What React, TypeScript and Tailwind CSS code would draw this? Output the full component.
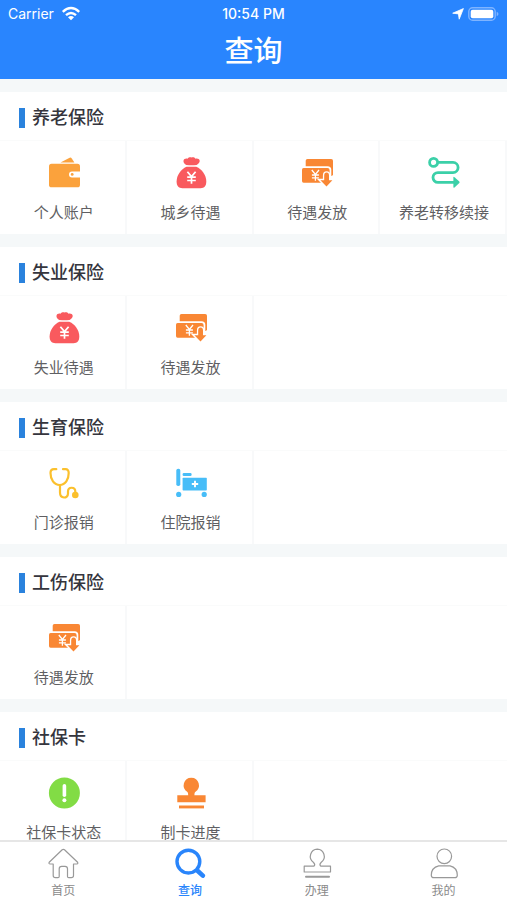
import React, { useState } from "react";

const WalletIcon = () => (
  <svg viewBox="0 0 32 32" className="h-8 w-8" aria-hidden="true">
    <path d="M12.500 5.600 21.200 0.900Q22.800 0.100 23.800 1.500L26.400 5.600Z" fill="#fba23c" />
    <rect x="1" y="6.700" width="31" height="23.600" rx="2.600" fill="#fba23c" />
    <path d="M32.500 14.400H24a3 3 0 0 0 0 6h8.500Z" fill="#fff" />
    <circle cx="24.200" cy="17.400" r="1.400" fill="#fba23c" />
  </svg>
);

const BagIcon = () => (
  <svg viewBox="0 0 32 32" className="h-8 w-8" aria-hidden="true">
    <path
      d="M11.400 7.900C9.300 6.800 8.300 5.400 8.500 3.800 8.700 2 10.700 1.200 12.500 1.700 13.500 0.200 15.300-0.100 16.500 0.400 18-0.100 19.600 0.300 20.500 1.700 22.500 1.200 24.500 2 24.700 3.800 24.800 5.400 23.800 6.800 21.600 7.900 18 8.500 15 8.500 11.400 7.900Z"
      fill="#f95a5e"
    />
    <path
      d="M11.500 9.700H21.300C27 12.300 31.300 18 31.300 24.500 31.300 29 29.300 31.200 25.600 31.200H7.400C3.600 31.200 1.600 29 1.600 24.500 1.600 18 6 12.300 11.500 9.700Z"
      fill="#f95a5e"
    />
    <path
      d="M12.400 14.700 16.500 19.600 20.600 14.700M16.500 19.600V26.800M12.200 20.200H20.800M12.200 23.500H20.800"
      fill="none"
      stroke="#fff"
      strokeWidth="1.700"
    />
  </svg>
);

const PayoutIcon = () => (
  <svg viewBox="0 0 32 32" className="h-8 w-8" aria-hidden="true">
    <rect x="4.700" y="2" width="27.300" height="17" rx="1.800" fill="#f98734" />
    <path d="M0 9.300H26.500Q30.300 9.300 30.300 13V21H0Z" fill="#fff" />
    <path d="M2.600 10.900H26.500Q28.600 10.900 28.600 13V25.700H2.600Q1 25.700 1 24.100V12.500Q1 10.900 2.600 10.900Z" fill="#f98734" />
    <path
      d="M10.800 13 14.400 17.400 18 13M14.400 17.400V23.700M10.900 18H17.900M10.900 20.800H17.900"
      fill="none"
      stroke="#fff"
      strokeWidth="1.300"
    />
    <path
      d="M19.400 23.200H23.400V18.500Q23.400 15.800 25.600 15.800 27.800 15.800 27.800 18.500V23.200H31.400L25.500 29.400Z"
      fill="none"
      stroke="#fff"
      strokeWidth="3"
    />
    <path
      d="M19.400 23.200H23.200V18.500Q23.200 15.600 25.600 15.600 28 15.600 28 18.500V23.200H31.400L25.500 29.400Z"
      fill="#f98734"
    />
  </svg>
);

const RouteIcon = () => (
  <svg viewBox="0 0 32 32" className="h-8 w-8" aria-hidden="true">
    <g fill="none" stroke="#3bd0a8" strokeWidth="2.800">
      <circle cx="5.600" cy="5.400" r="4" />
      <path d="M9.600 5.400H25a5.100 5.100 0 0 1 0 10.200H9.900a4.900 4.900 0 0 0 0 9.800H26" />
    </g>
    <path d="M25.400 20.600Q25.400 19.300 26.500 20.200L31.300 24.600Q32 25.400 31.300 26.100L26.500 30.400Q25.400 31.300 25.400 30Z" fill="#3bd0a8" />
  </svg>
);

const StethoscopeIcon = () => (
  <svg viewBox="0 0 32 32" className="h-8 w-8" aria-hidden="true">
    <g fill="none" stroke="#fbc02d" strokeWidth="2.200" strokeLinecap="round">
      <path d="M8.300 2.200H6Q2.500 2.200 2.500 6C2.500 12.500 6 18 11.700 18S20.700 12.500 20.700 6Q20.700 2.200 17.500 2.200H15" />
      <path d="M12 18V25.500C12 32 20 32 20 26.500V24.500C20 19.500 27.300 19.500 27.300 24.500V27" />
    </g>
    <circle cx="27.300" cy="28" r="3.300" fill="#fbc02d" />
  </svg>
);

const BedIcon = () => (
  <svg viewBox="0 0 32 32" className="h-8 w-8" aria-hidden="true">
    <g fill="#47bdf8">
      <rect x="1.300" y="1.700" width="4" height="17.300" rx="1.800" />
      <rect x="7.600" y="6" width="9" height="2.900" rx="1.200" />
      <rect x="7.600" y="10.700" width="24.200" height="12.700" rx="0.700" />
      <circle cx="3.700" cy="27.400" r="2.600" />
      <circle cx="29.200" cy="27.400" r="2.600" />
    </g>
    <path d="M20 13.800V20.200M16.800 17H23.200" stroke="#fff" strokeWidth="1.900" />
  </svg>
);

const StatusIcon = () => (
  <svg viewBox="0 0 32 32" className="h-8 w-8" aria-hidden="true">
    <circle cx="16.400" cy="16" r="15.500" fill="#82dc45" />
    <path d="M16.400 8.800V18.200" stroke="#fff" strokeWidth="3.600" strokeLinecap="round" />
    <circle cx="16.400" cy="23.200" r="2" fill="#fff" />
  </svg>
);

const StampIcon = () => (
  <svg viewBox="0 0 32 32" className="h-8 w-8" aria-hidden="true">
    <path
      d="M16.300 0.700A7.700 7.700 0 0 1 20.200 15Q19.400 15.600 19.400 18.300H30.600V25.300H2.300V18.300H13.200Q13.200 15.600 12.400 15A7.700 7.700 0 0 1 16.300 0.700Z"
      fill="#f98734"
    />
    <rect x="4" y="28.500" width="25" height="2.900" fill="#f98734" />
  </svg>
);

const HomeIcon = () => (
  <svg viewBox="0 0 32 32" className="h-8 w-8" fill="none" stroke="#999" strokeWidth="1.200" strokeLinejoin="round" aria-hidden="true">
    <path d="M15.200 2.800Q16.300 1.800 17.500 2.800L30.600 15.200Q31.300 16.700 29.800 17H26.500V28.500Q26.500 30.700 24.300 30.700H21.700Q20.500 30.700 20.500 29.500V21.800Q20.500 19.300 18 19.300H14.700Q12.200 19.300 12.200 21.800V29.500Q12.200 30.700 11 30.700H8.400Q6.200 30.700 6.200 28.500V17H2.900Q1.400 16.700 2.200 15.200Z" />
  </svg>
);

const SearchIcon = () => (
  <svg viewBox="0 0 32 32" className="h-8 w-8" fill="none" stroke="#2985fb" aria-hidden="true">
    <circle cx="14.400" cy="14.600" r="11.400" strokeWidth="3.400" />
    <path d="M23.800 24 28.800 28.600" strokeWidth="4.600" strokeLinecap="round" />
  </svg>
);

const HandleIcon = () => (
  <svg viewBox="0 0 32 32" className="h-8 w-8" fill="none" stroke="#999" strokeWidth="1.200" strokeLinejoin="round" aria-hidden="true">
    <path d="M16.300 2.200A7.200 7.200 0 0 1 20.300 15.200Q18.200 17.200 19.300 18.600 19.700 19.200 20.800 19.200H29.500V25H3.200V19.200H11.800Q13 19.200 13.400 18.600 14.400 17.200 12.300 15.200A7.200 7.200 0 0 1 16.300 2.200Z" />
    <path d="M5 29.700H28" strokeWidth="2" strokeLinecap="round" />
  </svg>
);

const UserIcon = () => (
  <svg viewBox="0 0 32 32" className="h-8 w-8" fill="none" stroke="#999" strokeWidth="1.200" aria-hidden="true">
    <circle cx="16.300" cy="9.300" r="7.300" />
    <path d="M10.700 18.800H22Q29.300 20.500 29.300 28.200 29.300 30.700 26.700 30.700H5.900Q3.300 30.700 3.300 28.200 3.300 20.500 10.700 18.800Z" />
  </svg>
);

const sections = [
  {
    title: "养老保险",
    items: [
      { label: "个人账户", icon: WalletIcon },
      { label: "城乡待遇", icon: BagIcon },
      { label: "待遇发放", icon: PayoutIcon },
      { label: "养老转移续接", icon: RouteIcon },
    ],
  },
  {
    title: "失业保险",
    items: [
      { label: "失业待遇", icon: BagIcon },
      { label: "待遇发放", icon: PayoutIcon },
    ],
  },
  {
    title: "生育保险",
    items: [
      { label: "门诊报销", icon: StethoscopeIcon },
      { label: "住院报销", icon: BedIcon },
    ],
  },
  {
    title: "工伤保险",
    items: [{ label: "待遇发放", icon: PayoutIcon }],
  },
  {
    title: "社保卡",
    items: [
      { label: "社保卡状态", icon: StatusIcon },
      { label: "制卡进度", icon: StampIcon },
    ],
  },
];

const tabs = [
  { label: "首页", icon: HomeIcon },
  { label: "查询", icon: SearchIcon },
  { label: "办理", icon: HandleIcon },
  { label: "我的", icon: UserIcon },
];

const StatusBar = () => (
  <div className="grid h-7 grid-cols-3 items-center px-2 text-sm leading-7">
    <div className="flex items-center gap-[7px]">
      <span>Carrier</span>
      <svg viewBox="0 0 20 16" className="h-4 w-5" fill="none" stroke="#fff" strokeWidth="2.400" aria-hidden="true">
        <path d="M1.800 5.800Q10-1.600 18.200 5.800" />
        <path d="M5 9.200Q10 4.700 15 9.200" />
        <path d="M10 14.200 7 11.200Q10 8.600 13 11.200Z" fill="#fff" stroke="none" />
      </svg>
    </div>
    <span className="text-center font-medium">10:54 PM</span>
    <div className="flex items-center justify-end gap-1">
      <svg viewBox="0 0 12 12" className="h-3 w-3" fill="#fff" stroke="#fff" strokeWidth="0.800" strokeLinejoin="round" aria-hidden="true">
        <path d="M11.400 0.600 7.200 11.200 6.400 5.900 0.700 5.200Z" />
      </svg>
      <svg viewBox="0 0 31 14" className="h-[14px] w-[31px]" aria-hidden="true">
        <rect x="0.800" y="0.800" width="26.400" height="12.400" rx="3.800" fill="none" stroke="#7fb4ff" strokeWidth="1.400" />
        <rect x="2.700" y="2.700" width="22.600" height="8.600" rx="2" fill="#fff" />
        <path d="M28.700 4.800Q30.500 5.500 30.500 7T28.700 9.200Z" fill="#7fb4ff" />
      </svg>
    </div>
  </div>
);

export default function App() {
  const [active, setActive] = useState("查询");

  return (
    <div className="flex h-screen flex-col bg-[#f5f8f9] font-[Inter,'Noto_Sans_CJK_SC',sans-serif]">
      <header className="shrink-0 bg-[#2985fe] pb-1 text-white">
        <StatusBar />
        <h1 className="text-center text-[29px] leading-[47px] font-medium">查询</h1>
      </header>

      <main className="flex min-h-0 flex-1 flex-col gap-[13px] overflow-y-auto pt-[13px] [scrollbar-width:none]">
        {sections.map((section) => (
          <section key={section.title} className="shrink-0 bg-white">
            <h2 className="flex h-12 items-center gap-[7px] pt-1 pl-[19px] text-lg font-medium text-[#35353d]">
              <span className="h-5 w-[6px] bg-[#2a82dd]" />
              {section.title}
            </h2>
            <div className="grid grid-cols-4 border-t border-[#fafbfb]">
              {section.items.map((item) => (
                <button
                  key={item.label}
                  type="button"
                  className="flex flex-col items-center gap-[13px] border-r-2 border-[#f8f9fa] pt-4 pb-[10px] pl-[3px] text-[15px] leading-[22px] text-[#5f5f63]"
                >
                  <item.icon />
                  <span className="whitespace-nowrap">{item.label}</span>
                </button>
              ))}
            </div>
          </section>
        ))}
      </main>

      <nav className="grid shrink-0 grid-cols-4 border-t-2 border-[#e6e6e6] bg-white pt-[5px] pb-px">
        {tabs.map((tab) => (
          <button
            key={tab.label}
            type="button"
            onClick={() => setActive(tab.label)}
            className={`flex flex-col items-center gap-1 text-xs ${
              tab.label === active ? "font-medium text-[#2985fb]" : "text-[#8a8a8a]"
            }`}
          >
            <tab.icon />
            <span>{tab.label}</span>
          </button>
        ))}
      </nav>
    </div>
  );
}
